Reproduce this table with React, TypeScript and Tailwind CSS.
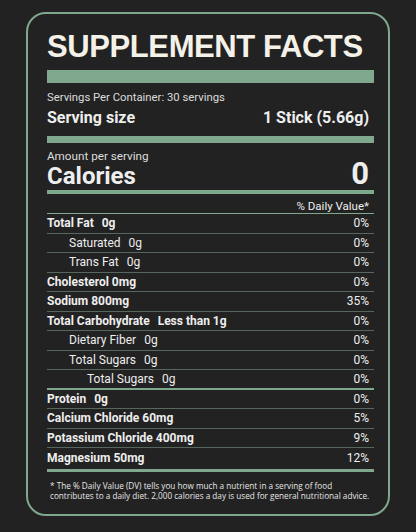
import React from "react";

type Row = {
  label: string;
  amount?: string;
  dv: string;
  bold?: boolean;
  indent?: 0 | 1 | 2;
  thick?: boolean;
  last?: boolean;
};

const rows: Row[] = [
  { label: "Total Fat", amount: "0g", dv: "0%", bold: true },
  { label: "Saturated", amount: "0g", dv: "0%", indent: 1 },
  { label: "Trans Fat", amount: "0g", dv: "0%", indent: 1 },
  { label: "Cholesterol 0mg", dv: "0%", bold: true },
  { label: "Sodium 800mg", dv: "35%", bold: true },
  { label: "Total Carbohydrate", amount: "Less than 1g", dv: "0%", bold: true },
  { label: "Dietary Fiber", amount: "0g", dv: "0%", indent: 1 },
  { label: "Total Sugars", amount: "0g", dv: "0%", indent: 1 },
  { label: "Total Sugars", amount: "0g", dv: "0%", indent: 2, thick: true },
  { label: "Protein", amount: "0g", dv: "0%", bold: true },
  { label: "Calcium Chloride 60mg", dv: "5%", bold: true },
  { label: "Potassium Chloride 400mg", dv: "9%", bold: true },
  { label: "Magnesium 50mg", dv: "12%", bold: true, last: true },
];

function FactRow({ row }: { row: Row }) {
  const indent = row.indent === 2 ? "pl-[40px]" : row.indent === 1 ? "pl-[22px]" : "pl-0";
  const border = row.last
    ? ""
    : row.thick
    ? "border-b-[2px] border-[#7fa88e]"
    : "border-b border-[#56685c]";
  return (
    <div className={`flex items-center justify-between h-[19.5px] pr-[5px] text-[12px] leading-none ${border}`}>
      <div className={`flex items-center ${indent} ${row.bold ? "font-bold" : "font-normal"}`}>
        <span>{row.label}</span>
        {row.amount && <span className="ml-[8px]">{row.amount}</span>}
      </div>
      <span className="font-normal">{row.dv}</span>
    </div>
  );
}

export default function App() {
  return (
    <div className="w-full min-h-[532px] bg-[#222222] flex justify-center pt-[12px] font-['Roboto',sans-serif] text-[#eeeeee]">
      <div className="w-[364px] h-[504px] border-2 border-[#7fa88e] rounded-[20px] pl-[19px] pr-[14px] pt-[17px] flex flex-col">
        <h1 className="text-[31px] leading-[31px] font-bold tracking-[-0.4px] text-[#f4f2e8] font-['Liberation_Sans',sans-serif]">
          SUPPLEMENT FACTS
        </h1>
        <div className="mt-[8px] h-[13px] bg-[#7fa88e]" />

        <p className="mt-[8px] text-[11.3px] leading-[14px] text-[#dddddd]">Servings Per Container: 30 servings</p>
        <div className="mt-[3px] flex justify-between pr-[5px] text-[16px] leading-[20px] font-bold">
          <span>Serving size</span>
          <span>1 Stick (5.66g)</span>
        </div>
        <div className="mt-[8px] h-[7px] bg-[#7fa88e]" />

        <p className="mt-[7px] text-[11.7px] leading-[12px] text-[#dddddd]">Amount per serving</p>
        <div className="flex items-baseline justify-between pr-[5px] font-bold">
          <span className="text-[24px] leading-[24px]">Calories</span>
          <span className="text-[31px] leading-[24px]">0</span>
        </div>
        <div className="mt-[2px] h-[4px] bg-[#7fa88e]" />

        <div className="mt-[5px] text-right pr-[5px] text-[11.5px] leading-[14px] border-b border-[#7fa88e]">
          % Daily Value*
        </div>

        {rows.map((r, i) => (
          <FactRow key={i} row={r} />
        ))}
        <div className="mt-[1px] h-[3px] bg-[#7fa88e]" />

        <p className="mt-[9px] ml-[3px] text-[8.2px] leading-[10px] text-[#e6e6e6] font-['Open_Sans',sans-serif] whitespace-nowrap">
          * The % Daily Value (DV) tells you how much a nutrient in a serving of food
          <br />
          contributes to a daily diet. 2,000 calories a day is used for general nutritional advice.
        </p>
      </div>
    </div>
  );
}
